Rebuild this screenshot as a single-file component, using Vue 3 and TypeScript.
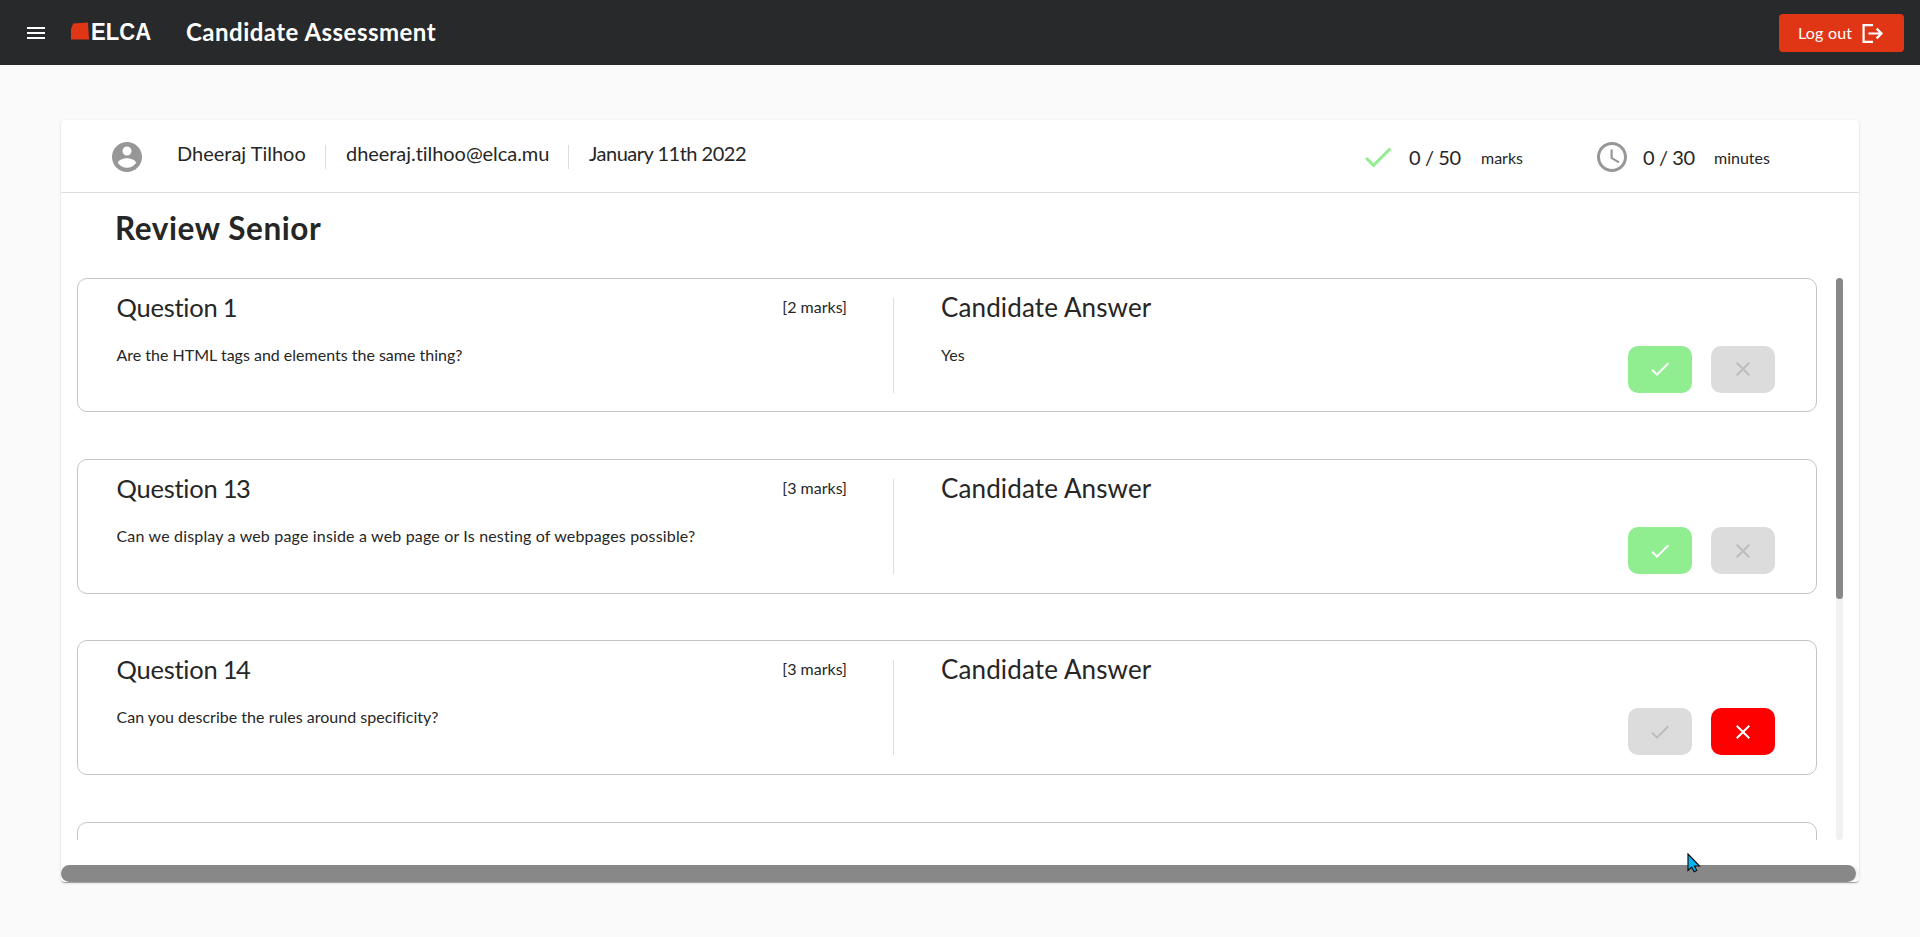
<script setup lang="ts">
interface Question {
  id: number
  marks: number
  text: string
  answer: string
  correct: boolean
  tracking: number
}

const candidate = {
  name: 'Dheeraj Tilhoo',
  email: 'dheeraj.tilhoo@elca.mu',
  date: 'January 11th 2022',
}

const questions: Question[] = [
  { id: 1, marks: 2, text: 'Are the HTML tags and elements the same thing?', answer: 'Yes', correct: true, tracking: 0 },
  { id: 13, marks: 3, text: 'Can we display a web page inside a web page or Is nesting of webpages possible?', answer: '', correct: true, tracking: 0.17 },
  { id: 14, marks: 3, text: 'Can you describe the rules around specificity?', answer: '', correct: false, tracking: 0.02 },
]
</script>

<template>
  <div class="page">
    <header class="topbar">
      <svg class="menu" viewBox="0 0 24 24"><path d="M3 18h18v-2H3v2zm0-5h18v-2H3v2zm0-7v2h18V6H3z" /></svg>
      <div class="logo">
        <svg class="logo-mark" viewBox="0 0 18 18"><path d="M2.2 1.6 17 .4 18 17.4H0V7z" /></svg>
        <span class="logo-text">ELCA</span>
      </div>
      <h1 class="app-title">Candidate Assessment</h1>
      <button class="logout" type="button">
        <span class="logout-text">Log out</span>
        <svg class="logout-icon" viewBox="0 0 22 19"><path d="M11 1.2H1.6v16.6H11M6.5 9.5h13M14.6 4.6l4.9 4.9-4.9 4.9" /></svg>
      </button>
    </header>

    <main class="panel">
      <section class="summary">
        <svg class="avatar" viewBox="0 0 24 24"><path d="M12 2C6.48 2 2 6.48 2 12s4.48 10 10 10 10-4.480 10-10S17.520 2 12 2zm0 3c1.660 0 3 1.340 3 3s-1.340 3-3 3-3-1.340-3-3 1.340-3 3-3zm0 14.200c-2.500 0-4.710-1.280-6-3.220.03-1.990 4-3.080 6-3.080 1.990 0 5.970 1.090 6 3.080-1.290 1.940-3.500 3.220-6 3.220z" /></svg>
        <div class="details">
          <span class="detail name">{{ candidate.name }}</span>
          <span class="detail email">{{ candidate.email }}</span>
          <span class="detail date">{{ candidate.date }}</span>
        </div>
        <div class="stat marks-stat">
          <svg class="stat-icon tick" viewBox="0 0 24 24"><path d="M9 16.170L4.830 12l-1.420 1.410L9 19 21 7l-1.410-1.410z" /></svg>
          <span class="value">0 / 50</span>
          <span class="unit">marks</span>
        </div>
        <div class="stat time-stat">
          <svg class="stat-icon clock" viewBox="0 0 24 24"><path d="M11.990 2C6.470 2 2 6.480 2 12s4.470 10 9.990 10C17.520 22 22 17.520 22 12S17.520 2 11.990 2zM12 20c-4.420 0-8-3.580-8-8s3.580-8 8-8 8 3.580 8 8-3.580 8-8 8zM12.500 7H11v6l5.250 3.150.75-1.230-4.500-2.670z" /></svg>
          <span class="value">0 / 30</span>
          <span class="unit">minutes</span>
        </div>
      </section>

      <h2 class="review-title">Review Senior</h2>

      <section class="review">
        <div class="list">
          <article v-for="q in questions" :key="q.id" class="card">
            <div class="question">
              <div class="question-head">
                <h3 class="heading">Question <span class="number">{{ q.id }}</span></h3>
                <span class="marks">[{{ q.marks }} marks]</span>
              </div>
              <p class="body" :style="{ letterSpacing: q.tracking + 'px' }">{{ q.text }}</p>
            </div>
            <div class="answer">
              <h3 class="heading wide">Candidate Answer</h3>
              <p class="body">{{ q.answer }}</p>
            </div>
            <div class="actions">
              <button type="button" class="mark" :class="{ right: q.correct }">
                <svg class="mark-icon" viewBox="0 0 24 24"><path d="M9 16.170L4.830 12l-1.420 1.410L9 19 21 7l-1.410-1.410z" /></svg>
              </button>
              <button type="button" class="mark" :class="{ wrong: !q.correct }">
                <svg class="mark-icon" viewBox="0 0 24 24"><path d="M19 6.410L17.590 5 12 10.590 6.410 5 5 6.410 10.590 12 5 17.590 6.410 19 12 13.410 17.590 19 19 17.590 13.410 12z" /></svg>
              </button>
            </div>
          </article>
          <article class="card"></article>
        </div>
        <div class="track"><div class="thumb"></div></div>
      </section>

      <div class="h-track"><div class="h-thumb"></div></div>
    </main>

    <svg class="cursor" viewBox="0 0 14 20"><path d="M1 1v16.500l3.600-3.300 2.600 4.500 2.500-1.200-2.200-4.500h5z" /></svg>
  </div>
</template>

<style>
body {
  background: #fafafa;
  overflow: hidden;
}
</style>

<style scoped>
* {
  box-sizing: border-box;
  margin: 0;
  padding: 0;
}
svg {
  display: block;
  flex: none;
}
.page {
  position: relative;
  height: 937px;
  background: #fafafa;
  color: #262626;
  font-family: Lato, "Open Sans", sans-serif;
  font-variant-ligatures: none;
  white-space: nowrap;
}
.topbar {
  display: flex;
  height: 65px;
  background: #27292b;
  color: #fff;
  padding: 0 16px 0 24px;
}
.menu {
  width: 24px;
  height: 24px;
  margin-top: 21px;
  fill: #fff;
}
.logo {
  display: flex;
  width: 82px;
  margin-left: 23px;
  padding-top: 22px;
}
.logo-mark {
  width: 18px;
  height: 18px;
  fill: #e03616;
}
.logo-text {
  margin: -2px 0 0 2px;
  font: 700 24px/24px "Liberation Sans", sans-serif;
  transform: scaleX(0.92);
  transform-origin: left;
}
.app-title {
  margin: 18px 0 0 33px;
  font-size: 24px;
  line-height: 27px;
  font-weight: 700;
  letter-spacing: 0.48px;
}
.logout {
  display: flex;
  width: 125px;
  height: 38px;
  margin: 14px 0 0 auto;
  padding-left: 19px;
  border: 0;
  border-radius: 4px;
  background: #e03616;
  color: #fff;
  font: 400 16px/38px Lato, sans-serif;
}
.logout-text {
  width: 64px;
  text-align: left;
  line-height: 38px;
  letter-spacing: 0.2px;
}
.logout-icon {
  width: 22px;
  height: 19px;
  margin-top: 10px;
  fill: none;
  stroke: #fff;
  stroke-width: 2.2;
}
.panel {
  display: flex;
  flex-direction: column;
  width: 1798px;
  height: 762px;
  margin: 55px 0 0 61px;
  border-radius: 4px;
  background: #fff;
  box-shadow: 0 2px 1px -1px rgba(0, 0, 0, 0.2), 0 1px 1px rgba(0, 0, 0, 0.14), 0 1px 3px rgba(0, 0, 0, 0.12);
  overflow: hidden;
}
.summary {
  display: flex;
  height: 73px;
  flex: none;
  border-bottom: 1px solid #dcdcdc;
}
.avatar {
  width: 36px;
  height: 36px;
  margin: 19px 0 0 48px;
  fill: #979797;
}
.details {
  display: flex;
  margin: 25px 0 0 18px;
}
.detail {
  height: 24px;
  padding: 0 20px 0 14px;
  font-size: 20px;
  line-height: 17px;
}
.detail + .detail {
  border-left: 1px solid #dcdcdc;
  padding-left: 20px;
}
.name {
  width: 162px;
}
.email {
  width: 243px;
  letter-spacing: -0.05px;
}
.date {
  letter-spacing: -0.5px;
}
.stat {
  display: flex;
  line-height: 22px;
  padding-top: 26px;
}
.marks-stat {
  width: 234px;
  margin-left: auto;
}
.time-stat {
  width: 265px;
}
.stat-icon {
  width: 36px;
  height: 36px;
  margin-top: -7px;
}
.tick {
  fill: #90ee90;
}
.clock {
  fill: #979797;
}
.value {
  width: 72px;
  margin-left: 13px;
  font-size: 20px;
  letter-spacing: -0.4px;
}
.time-stat .value {
  width: 71px;
}
.unit {
  font-size: 16px;
  line-height: 24px;
}
.review-title {
  height: 85px;
  flex: none;
  padding: 17px 0 0 54px;
  font-size: 31.5px;
  line-height: 36px;
  letter-spacing: 0.58px;
}
.review {
  display: flex;
  height: 562px;
  flex: none;
  padding-left: 16px;
}
.list {
  width: 1740px;
  height: 562px;
  overflow: hidden;
}
.card {
  display: flex;
  height: 134.4px;
  margin-bottom: 46.8px;
  border: 1px solid #c4c4c4;
  border-radius: 10px;
}
.question {
  width: 816px;
  height: 95px;
  margin-top: 19px;
  padding: 0 46px 0 38.5px;
  border-right: 1px solid #dcdcdc;
}
.question-head {
  display: flex;
  justify-content: space-between;
}
.heading {
  margin-top: -7px;
  font-size: 25.5px;
  line-height: 32px;
  font-weight: 400;
  letter-spacing: -0.25px;
}
.heading.wide {
  font-size: 26px;
  letter-spacing: 0.12px;
}
.number {
  margin-left: -1px;
  letter-spacing: -1.5px;
}
.marks {
  font-size: 16px;
  line-height: 18px;
}
.body {
  margin-top: 22px;
  font-size: 16px;
  line-height: 20px;
}
.answer {
  width: 734px;
  margin-top: 19px;
  padding-left: 47px;
}
.actions {
  display: flex;
  gap: 19px;
  margin-top: 67px;
}
.mark {
  display: flex;
  justify-content: center;
  width: 64px;
  height: 47px;
  padding-top: 11.4px;
  border: 0;
  border-radius: 10px;
  background: #dcdcdc;
  fill: #bcbcbc;
}
.mark.right {
  background: #90ee90;
  fill: #fff;
}
.mark.wrong {
  background: #f00;
  fill: #fff;
}
.mark-icon {
  width: 24px;
  height: 24px;
}
.track {
  width: 7px;
  margin-left: 19px;
  border-radius: 4px;
  background: #f1f1f1;
}
.thumb {
  height: 321px;
  border-radius: 4px;
  background: #888;
}
.h-track {
  height: 17px;
  margin-top: auto;
  border-radius: 10px;
  background: #f1f1f1;
}
.h-thumb {
  width: 1795px;
  height: 17px;
  border-radius: 10px;
  background: #888;
}
.cursor {
  position: absolute;
  left: 1687px;
  top: 853px;
  width: 14px;
  height: 20px;
  fill: #00b4f5;
  stroke: #111;
  stroke-width: 1.200;
}
</style>
